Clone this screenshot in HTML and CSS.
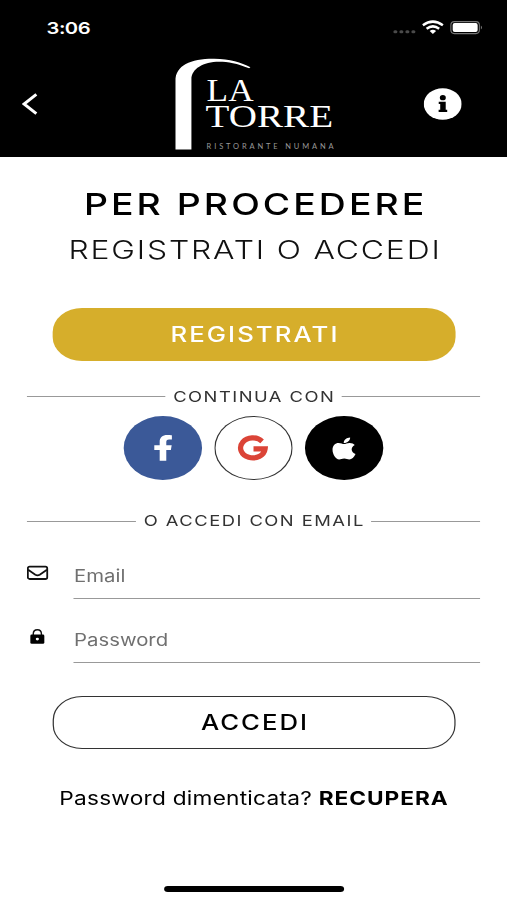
FILE: index.html
```html
<!DOCTYPE html>
<html lang="it">
<head>
<meta charset="utf-8">
<meta name="viewport" content="width=device-width, initial-scale=1">
<title>La Torre - Accedi</title>
<link rel="stylesheet" href="styles.css">
</head>
<body>
<div class="screen">
  <header class="header">
    <div class="status">
      <span class="time">3:06</span>
      <svg class="status-icons" viewBox="0 0 92 16" preserveAspectRatio="none" aria-hidden="true">
        <g fill="#4a4a4a"><rect x="1.5" y="10.3" width="4" height="3" rx="1.5"/><rect x="7.5" y="10.3" width="4" height="3" rx="1.5"/><rect x="13.5" y="10.3" width="4" height="3" rx="1.5"/><rect x="19.5" y="10.3" width="4" height="3" rx="1.5"/></g>
        <g fill="none" stroke="#fff" stroke-width="2.5"><path d="M31 5.2Q41 -2 51 5.2"/><path d="M34.7 8.7Q41 4 47.3 8.7"/></g>
        <path d="M37.8 11Q41 8.6 44.2 11L41 13.9Z" fill="#fff"/>
        <rect x="59" y="1.6" width="28.5" height="12" rx="3.5" fill="none" stroke="#777" stroke-width="1.1"/>
        <rect x="60.8" y="3.1" width="25" height="9" rx="2" fill="#fff"/>
        <path d="M89 5.6Q91.3 7.6 89 9.6Z" fill="#777"/>
      </svg>
    </div>
    <nav class="nav">
      <svg class="back" viewBox="0 0 16 22" preserveAspectRatio="none" aria-label="Indietro"><path d="M14.3 1.4L2 11L14.3 20.6" fill="none" stroke="#fff" stroke-width="3"/></svg>
      <svg class="logo" viewBox="175 58 160 94" preserveAspectRatio="none">
        <path d="M175.3 149.5V81C175.3 65 191 58.5 214 58.7C230 59 241 62.5 250.3 67.2L249 68.3C237 63.3 228 61.7 219 61.7C203 61.7 191.3 69 191.3 79V149.5Z" fill="#fff"/>
        <g class="logo-name"><text x="206.5" y="101.3" textLength="47" lengthAdjust="spacingAndGlyphs">LA</text><text x="205.5" y="127" textLength="127.5" lengthAdjust="spacingAndGlyphs">TORRE</text></g>
        <text class="logo-tag" x="206.5" y="149" textLength="127">RISTORANTE NUMANA</text>
      </svg>
      <svg class="info" viewBox="0 0 38 32" preserveAspectRatio="none" aria-label="Informazioni"><ellipse cx="19" cy="16" rx="19" ry="15.8" fill="#fff"/><ellipse cx="19.1" cy="9.7" rx="3" ry="2.6" fill="#000"/><path d="M15 13.8H22V21.7H23.5V23.9H14.9V21.7H16.5V16H15Z" fill="#000"/></svg>
    </nav>
  </header>

  <main class="main">
    <h1 class="title">PER PROCEDERE</h1>
    <p class="subtitle">REGISTRATI O ACCEDI</p>
    <button class="btn btn-gold">REGISTRATI</button>

    <div class="divider divider-social"><span>CONTINUA CON</span></div>
    <div class="social">
      <a class="round facebook" aria-label="Facebook"><svg viewBox="0 0 78 64" preserveAspectRatio="none"><path d="M48.2 19.2V23.6H45.4C43.2 23.6 42.6 24.5 42.6 26V29.2H48L47.2 33.9H42.6V44.8H36V33.9H30.6V29.2H36V25.8C36 21.3 38.9 18.9 43.5 18.9C45.8 18.9 47.1 19.1 48.2 19.2Z" fill="#fff"/></svg></a>
      <a class="round google" aria-label="Google"><svg viewBox="0 0 78 64" preserveAspectRatio="none"><path d="M47.8 25.3A12.3 10 0 1 0 50.8 32.9H39.2" fill="none" stroke="#db4437" stroke-width="5.2"/></svg></a>
      <a class="round apple" aria-label="Apple"><svg viewBox="0 0 78 64" preserveAspectRatio="none"><path d="M45.2 21.4C45.4 24.2 42.5 27 38.8 26.9C38.7 24 41.4 21.5 45.2 21.4ZM39.2 28.1C40.6 28.1 42 26.9 44.7 26.9C47.1 26.9 48.7 27.8 49.8 29.1C45.3 31.4 45.9 36.4 50.6 38C49.1 41.3 46.9 43.5 44.3 43.5C42.6 43.5 41.6 42.6 39.3 42.6C36.9 42.6 36 43.5 34.3 43.5C30.7 43.5 27.6 38.2 27.6 33.8C27.6 29.5 30.4 27 33.6 27C36 27 37.6 28.1 39.2 28.1Z" fill="#fff"/></svg></a>
    </div>
    <div class="divider divider-email"><span>O ACCEDI CON EMAIL</span></div>

    <form class="form">
      <label class="field">
        <svg class="icon" viewBox="0 0 22 16" preserveAspectRatio="none"><g fill="none" stroke="#111" stroke-width="1.8"><rect x=".9" y="1.6" width="19.4" height="12.4" rx="1.8"/><path d="M1.2 4.8L8.4 9.8Q10.6 11 12.8 9.8L20 4.8"/></g></svg>
        <input class="input" type="email" placeholder="Email">
      </label>
      <label class="field">
        <svg class="icon" viewBox="0 0 22 16" preserveAspectRatio="none"><path d="M6.3 7V5C6.3 -.6 14.5 -.6 14.5 5V7" fill="none" stroke="#111" stroke-width="1.4"/><rect x="3.4" y="5.6" width="14" height="9.2" rx="1.4" fill="#000"/><ellipse cx="10.4" cy="10.1" rx="1.6" ry="1.3" fill="#fff"/></svg>
        <input class="input" type="password" placeholder="Password">
      </label>
      <button class="btn btn-outline" type="button">ACCEDI</button>
    </form>
    <p class="recover">Password dimenticata? <a>RECUPERA</a></p>
  </main>
  <div class="home-bar"></div>
</div>
</body>
</html>
```
FILE: styles.css
```css
:root { --sx: 1.22464; }
* { box-sizing: border-box; }
html, body { margin: 0; width: 507px; height: 900px; overflow: hidden; background: #fff; }

/* 414px wide phone layout, widened to fill the window */
.screen {
  width: 414px; height: 900px;
  display: flex; flex-direction: column; align-items: center;
  transform: scaleX(var(--sx)); transform-origin: 0 0;
  font-family: Inter, "Liberation Sans", sans-serif; color: #000;
}
svg { display: block; }
.header { width: 100%; height: 157px; background: #000; color: #fff; }
.status {
  height: 55px; padding: 0 19px 0 38px;
  display: flex; justify-content: space-between; align-items: center;
}
.time { font-size: 16.5px; font-weight: 600; line-height: 20px; letter-spacing: -.4px; }
.status-icons { width: calc(92px / var(--sx)); height: 16px; }
.nav {
  height: 102px; padding: 0 37px 0 17.5px;
  display: flex; justify-content: space-between; align-items: center;
}
.back { width: calc(16px / var(--sx)); height: 22px; margin-top: -4px; }
.logo { width: calc(160px / var(--sx)); height: 94px; margin-left: 39.5px; margin-top: -2px; }
.logo-name { font-family: "Liberation Serif", serif; font-size: 31px; fill: #fff; }
.logo-tag { font-family: Lato, sans-serif; font-size: 7.5px; fill: #999; }
.info { width: calc(38px / var(--sx)); height: 32px; margin-top: -4px; }

.main { width: 100%; padding: 26.5px 22px 0; text-align: center; }
.title { margin: 0 -3.5px 0 0; font-size: 30.5px; line-height: 40px; font-weight: 550; letter-spacing: 2.5px; }
.subtitle { margin: 6px -2.5px 38.5px 0; font-size: 26px; line-height: 40px; font-weight: 300; letter-spacing: 1.5px; color: #111; }
.btn {
  display: block; width: 329px; height: 53px; margin: 0 0 0 20.8px; padding: 0 0 0 1.8px;
  border: 0; border-radius: 24px;
  font: 550 21px/53px Inter, "Liberation Sans", sans-serif; letter-spacing: 1.7px;
}
.btn-gold { background: #d6ae2b; color: #fff; }
.btn-outline {
  margin-top: 32.5px; border: 1px solid #333; background: #fff; color: #000;
  line-height: 51px; font-weight: 500; letter-spacing: 1.6px;
}
.divider { display: flex; align-items: center; gap: 6.5px; height: 20px; font-size: 15px; line-height: 20px; letter-spacing: 1.2px; color: #333; }
.divider::before, .divider::after { content: ""; flex: 1; height: 1px; background: #999; }
.divider span { margin-right: -1.2px; }
.divider-social { margin-top: 25.5px; }
.divider-email { margin-top: 31px; }
.social { display: flex; justify-content: center; gap: 10.4px; margin: 9.5px -.4px 0 0; }
.round { width: 63.7px; height: 64px; border-radius: 50%; }
.round svg { width: 100%; height: 100%; }
.facebook { background: #3b5998; }
.google { background: #fff; box-shadow: inset 0 0 0 1px #333; }
.apple { background: #000; }

.form { margin-top: 28px; }
.field { display: flex; align-items: flex-start; gap: 20.5px; height: 40px; }
.field + .field { margin-top: 24px; }
.icon { width: calc(22px / var(--sx)); height: 16px; margin-top: 6px; }
.input {
  flex: 1; min-width: 0; height: 40px; padding: 0 0 6px; border: 0; border-bottom: 1px solid #999;
  border-radius: 0; background: none; outline: 0;
  font: 400 16.6px/24px Inter, "Liberation Sans", sans-serif; color: #000;
}
.input::placeholder { color: #707070; opacity: 1; }
.recover { margin: 34px 0 0; font-size: 18.5px; line-height: 30px; letter-spacing: .2px; white-space: nowrap; }
.recover a { font-weight: 700; letter-spacing: .8px; margin-right: -.8px; }
.home-bar { width: 147px; height: 5.5px; margin: auto 0 8.5px; border-radius: 3px; background: #000; }
```
